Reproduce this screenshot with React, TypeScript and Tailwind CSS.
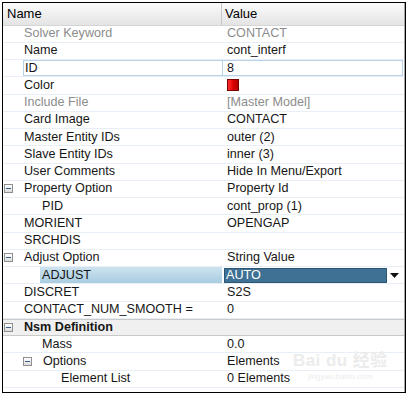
import React from 'react'

interface Row {
  name: string
  value?: string
  level: number
  expand?: boolean
  dim?: boolean
  dimValue?: boolean
  bold?: boolean
  kind?: 'id' | 'color' | 'adjust' | 'section'
}

const rows: Row[] = [
  { name: 'Solver Keyword', value: 'CONTACT', level: 0, dim: true, dimValue: true },
  { name: 'Name', value: 'cont_interf', level: 0 },
  { name: 'ID', value: '8', level: 0, kind: 'id' },
  { name: 'Color', level: 0, kind: 'color' },
  { name: 'Include File', value: '[Master Model]', level: 0, dim: true, dimValue: true },
  { name: 'Card Image', value: 'CONTACT', level: 0 },
  { name: 'Master Entity IDs', value: 'outer (2)', level: 0 },
  { name: 'Slave Entity IDs', value: 'inner (3)', level: 0 },
  { name: 'User Comments', value: 'Hide In Menu/Export', level: 0 },
  { name: 'Property Option', value: 'Property Id', level: 0, expand: true },
  { name: 'PID', value: 'cont_prop (1)', level: 1 },
  { name: 'MORIENT', value: 'OPENGAP', level: 0 },
  { name: 'SRCHDIS', value: '', level: 0 },
  { name: 'Adjust Option', value: 'String Value', level: 0, expand: true },
  { name: 'ADJUST', value: 'AUTO', level: 1, kind: 'adjust' },
  { name: 'DISCRET', value: 'S2S', level: 0 },
  { name: 'CONTACT_NUM_SMOOTH =', value: '0', level: 0 },
  { name: 'Nsm Definition', level: 0, expand: true, bold: true, kind: 'section' },
  { name: 'Mass', value: '0.0', level: 1 },
  { name: 'Options', value: 'Elements', level: 1, expand: true },
  { name: 'Element List', value: '0 Elements', level: 2 },
]

const indents = ['pl-[21px]', 'pl-[39px]', 'pl-[58px]']
const boxIndents = ['pl-[1px]', 'pl-[20px]', 'pl-[39px]']

function Minus() {
  return (
    <span className="mr-[10px] flex h-[9px] w-[9px] shrink-0 items-center justify-center border border-[#8f8f8f] bg-gradient-to-b from-white to-[#dcdcdc]">
      <span className="h-[1px] w-[5px] bg-[#3b5c8c]" />
    </span>
  )
}

export default function App() {
  return (
    <div className="relative h-[397px] w-[410px] bg-white text-[12.6px] text-[#161616]" style={{ fontFamily: '"Liberation Sans", Arial, sans-serif' }}>
      <div className="absolute left-[2px] top-[2px] h-[391px] w-[404px] border border-black">
        <div className="h-full border-r border-[#a5a5a5]">
          {/* header */}
          <div className="flex h-[22.5px] items-center border-b border-[#d5d5d5] bg-gradient-to-b from-[#fbfbfb] to-[#e4e4e4] text-[13px] text-black">
            <div className="flex h-full w-[219px] items-center border-r border-[#c8c8c8] pl-[4px]">Name</div>
            <div className="flex h-full flex-1 items-center pl-[3px]">Value</div>
          </div>

          {rows.map((r) => {
            if (r.kind === 'section') {
              return (
                <div key={r.name} className="flex h-[17.25px] items-center border-y border-[#c9c9c9] bg-[#f0f0f0] pl-[1px] font-bold">
                  <Minus />
                  <span className="pl-[1px]">{r.name}</span>
                </div>
              )
            }
            const nameCls = r.dim ? 'text-[#8c8c8c]' : ''
            return (
              <div key={r.name} className="flex h-[17.25px] items-stretch border-b border-[#e8eef6]">
                <div className={`flex w-[219px] items-center ${r.expand ? boxIndents[r.level] : indents[r.level]} ${nameCls}`}>
                  {r.expand && <Minus />}
                  {r.kind === 'adjust' ? (
                    <span className="-ml-[2px] flex h-full flex-1 items-center bg-gradient-to-b from-[#cde3ef] to-[#a9cde0] pl-[2px]">{r.name}</span>
                  ) : r.kind === 'id' ? (
                    <span className="-ml-[1px] flex h-full flex-1 items-center border border-r-0 border-[#b8d2ec] pl-[1px]">{r.name}</span>
                  ) : (
                    <span className={r.expand ? 'pl-[1px]' : ''}>{r.name}</span>
                  )}
                </div>
                {r.kind === 'color' ? (
                  <div className="flex flex-1 items-center pl-[5px]">
                    <span className="h-[12px] w-[12px] border border-[#7a0000] bg-gradient-to-r from-[#ff2a2a] via-[#e00000] to-[#b00000]" />
                  </div>
                ) : r.kind === 'adjust' ? (
                  <div className="flex flex-1 items-center pl-[2px] pr-[3px]">
                    <div className="flex h-[15px] flex-1 items-center border border-[#2e5675] bg-[#3e7194] pl-[1px] text-white">AUTO</div>
                    <div className="flex h-[15px] w-[14px] items-center justify-center">
                      <svg width="9" height="5" viewBox="0 0 9 5">
                        <path d="M0 0h9L4.5 5z" fill="#111" />
                      </svg>
                    </div>
                  </div>
                ) : r.kind === 'id' ? (
                  <div className="mr-[1px] flex flex-1 items-center border border-[#b8d2ec] pl-[4px]">{r.value}</div>
                ) : (
                  <div className={`flex flex-1 items-center pl-[5px] ${r.dimValue ? 'text-[#8c8c8c]' : ''}`}>{r.value}</div>
                )}
              </div>
            )
          })}
        </div>
      </div>

      {/* watermark */}
      <div className="pointer-events-none absolute left-[293px] top-[352px] flex flex-col items-center leading-none text-[#ececec]">
        <span className="text-[17px] font-bold tracking-wide" style={{ fontFamily: '"Liberation Sans", "Noto Sans CJK SC", sans-serif' }}>Bai du 经验</span>
        <span className="mt-[4px] text-[8px]">jingyan.baidu.com</span>
      </div>
    </div>
  )
}
